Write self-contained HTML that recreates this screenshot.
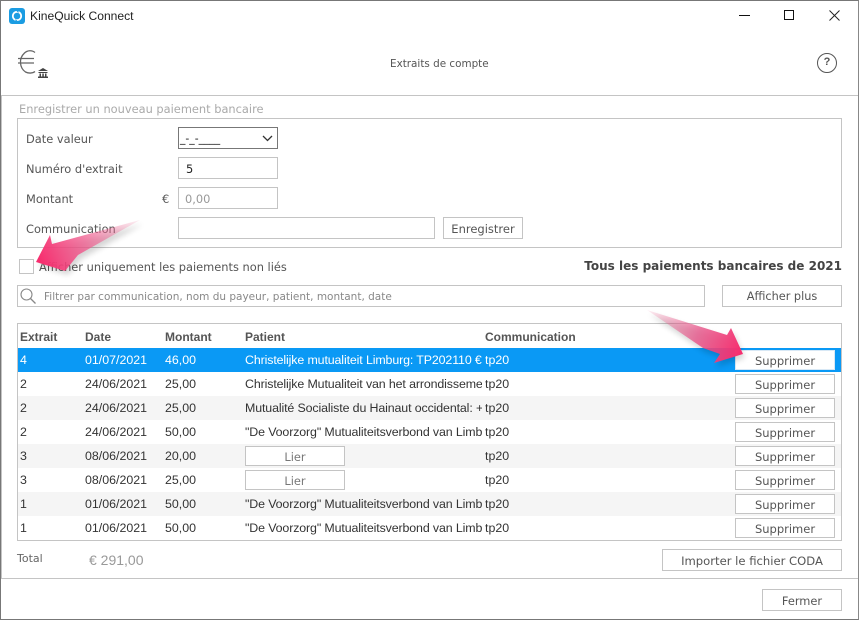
<!DOCTYPE html>
<html lang="fr"><head><meta charset="utf-8"><title>KineQuick Connect</title>
<style>
html,body{margin:0;padding:0;background:#fff}
#w{position:relative;width:859px;height:620px;overflow:hidden;background:#fff;font:11.4px "DejaVu Sans",sans-serif;color:#555}
#w div,#w svg{position:absolute;box-sizing:border-box}
.t{white-space:nowrap;line-height:16px;height:16px}
.b{border:1px solid #c4c4c4;background:#fff}
.btn{border:1px solid #c4c4c4;background:#fff;text-align:center;color:#555;white-space:nowrap}
.c{font:12.4px/25px "Liberation Sans",sans-serif;color:#333;white-space:nowrap;overflow:hidden;height:24px}
.n{letter-spacing:-.12px}
.h{font:bold 12px/26px "Liberation Sans",sans-serif;color:#555;white-space:nowrap;height:24px}
.s{left:735px;width:100px;height:20px;line-height:20px;font-size:11.5px}
.l{left:245px;width:100px;height:20px;line-height:20px;color:#777}
</style></head><body><div id="w">
<div style="left:0;top:0;width:859px;height:620px;border:1px solid #777;border-right-color:#888;z-index:9"></div>

<svg style="left:9px;top:8px" width="16" height="16" viewBox="0 0 16 16"><rect width="16" height="16" rx="3" fill="#1b9ce2"/><circle cx="8" cy="8" r="4.2" fill="none" stroke="#fff" stroke-width="1.8"/><path d="M7 2.500h2.500v2.500M9 13.500H6.500V11" fill="#1b9ce2"/></svg>
<div class="t" style="left:30px;top:8px;font:12.1px/16px 'Liberation Sans',sans-serif;color:#222">KineQuick Connect</div>
<div style="left:739px;top:15px;width:11px;height:1px;background:#111"></div>
<div style="left:784px;top:10px;width:10px;height:10px;border:1px solid #111"></div>
<svg style="left:829px;top:10px" width="11" height="11"><path d="M.5.5l10 10M10.500.5l-10 10" stroke="#222" fill="none"/></svg>

<svg style="left:18px;top:48px" width="32" height="34" viewBox="0 0 32 34"><path d="M17 4.500C14 2 9.500 2.200 6.500 5 3.500 7.800 2.200 11 2.500 15c.3 4 2 7 5 9 3 1.500 7 1.500 9.500-.5M0 10.500h16M0 15h16" fill="none" stroke="#666" stroke-width="1.300"/><path d="M20 23l5-3 5 3zM20.500 24h9v1h-9zM21.500 25.500H23v3h-1.500zM24.300 25.500h1.500v3h-1.500zM27 25.500h1.500v3H27zM20 28.500h10V30H20z" fill="#444"/></svg>
<div class="t" style="left:390px;top:56px;color:#555;font-size:10.400px">Extraits de compte</div>
<div style="left:817px;top:53px;width:20px;height:20px;border:1.300px solid #555;border-radius:50%;text-align:center;font:bold 11px/17px 'Liberation Sans',sans-serif;color:#555">?</div>

<div style="left:1px;top:95px;width:857px;height:1px;background:#c4c4c4"></div>
<div style="left:1px;top:95px;width:1px;height:483px;background:#c4c4c4"></div>
<div style="left:1px;top:578px;width:857px;height:1px;background:#c4c4c4"></div>
<div class="t" style="left:19px;top:101px;color:#aaa">Enregistrer un nouveau paiement bancaire</div>

<div class="b" style="left:17px;top:118px;width:825px;height:130px"></div>
<div class="t" style="left:26px;top:131px">Date valeur</div>
<div style="left:178px;top:127px;width:100px;height:22px;border:1px solid #777;background:#fff;color:#111;font:10.800px/22px 'DejaVu Sans',sans-serif;padding-left:1px">_-_-____</div>
<svg style="left:262px;top:135px" width="11" height="7"><path d="M1 1l4.500 4.500L10 1" fill="none" stroke="#333" stroke-width="1.300"/></svg>
<div class="t" style="left:26px;top:161px">Numéro d'extrait</div>
<div class="b" style="left:178px;top:157px;width:100px;height:22px;padding-left:7px;line-height:22px;color:#222">5</div>
<div class="t" style="left:26px;top:191px">Montant</div>
<div class="t" style="left:162px;top:191px">€</div>
<div class="b" style="left:178px;top:187px;width:100px;height:22px;padding-left:6px;line-height:22px;color:#999">0,00</div>
<div class="t" style="left:26px;top:221px">Communication</div>
<div class="b" style="left:178px;top:217px;width:257px;height:22px"></div>
<div class="btn" style="left:443px;top:217px;width:80px;height:22px;line-height:22px;font-size:11.500px">Enregistrer</div>

<div class="b" style="left:19px;top:259px;width:15px;height:15px"></div>
<div class="t" style="left:39px;top:259px">Afficher uniquement les paiements non liés</div>
<div class="t" style="left:584px;top:258px;font:bold 12px/16px 'DejaVu Sans',sans-serif;color:#444;letter-spacing:0;width:258px;text-align:right">Tous les paiements bancaires de 2021</div>

<div class="b" style="left:17px;top:285px;width:688px;height:22px"></div>
<svg style="left:19px;top:287px" width="18" height="18"><circle cx="7.500" cy="7.500" r="5.500" fill="none" stroke="#888" stroke-width="1.100"/><path d="M11.500 11.500l5 5" stroke="#888" stroke-width="1.300"/></svg>
<div class="t" style="left:44px;top:289px;color:#888;font-size:10.500px">Filtrer par communication, nom du payeur, patient, montant, date</div>
<div class="btn" style="left:722px;top:285px;width:120px;height:22px;line-height:22px;font-size:11.300px">Afficher plus</div>

<div class="b" style="left:17px;top:323px;width:825px;height:218px"></div>
<div class="h" style="left:20px;top:324px">Extrait</div><div class="h" style="left:85px;top:324px">Date</div><div class="h" style="left:165px;top:324px">Montant</div><div class="h" style="left:245px;top:324px">Patient</div><div class="h" style="left:485px;top:324px">Communication</div>

<div style="left:18px;top:348px;width:823px;height:24px;background:#0a99f5"></div>
<div style="left:18px;top:396px;width:823px;height:24px;background:#f5f5f5"></div>
<div style="left:18px;top:444px;width:823px;height:24px;background:#f5f5f5"></div>
<div style="left:18px;top:492px;width:823px;height:24px;background:#f5f5f5"></div>

<div class="c" style="left:20px;top:348px;color:#fff">4</div><div class="c" style="left:85px;top:348px;color:#fff">01/07/2021</div><div class="c" style="left:165px;top:348px;color:#fff">46,00</div><div class="c n" style="left:245px;top:348px;width:237px;color:#fff">Christelijke mutualiteit Limburg: TP202110 €46,00</div><div class="c" style="left:485px;top:348px;color:#fff">tp20</div>
<div class="c" style="left:20px;top:372px">2</div><div class="c" style="left:85px;top:372px">24/06/2021</div><div class="c" style="left:165px;top:372px">25,00</div><div class="c n" style="left:245px;top:372px;width:237px">Christelijke Mutualiteit van het arrondissement</div><div class="c" style="left:485px;top:372px">tp20</div>
<div class="c" style="left:20px;top:396px">2</div><div class="c" style="left:85px;top:396px">24/06/2021</div><div class="c" style="left:165px;top:396px">25,00</div><div class="c n" style="left:245px;top:396px;width:237px">Mutualité Socialiste du Hainaut occidental: +</div><div class="c" style="left:485px;top:396px">tp20</div>
<div class="c" style="left:20px;top:420px">2</div><div class="c" style="left:85px;top:420px">24/06/2021</div><div class="c" style="left:165px;top:420px">50,00</div><div class="c n" style="left:245px;top:420px;width:237px">"De Voorzorg" Mutualiteitsverbond van Limburg</div><div class="c" style="left:485px;top:420px">tp20</div>
<div class="c" style="left:20px;top:444px">3</div><div class="c" style="left:85px;top:444px">08/06/2021</div><div class="c" style="left:165px;top:444px">20,00</div><div class="btn l" style="top:446px">Lier</div><div class="c" style="left:485px;top:444px">tp20</div>
<div class="c" style="left:20px;top:468px">3</div><div class="c" style="left:85px;top:468px">08/06/2021</div><div class="c" style="left:165px;top:468px">25,00</div><div class="btn l" style="top:470px">Lier</div><div class="c" style="left:485px;top:468px">tp20</div>
<div class="c" style="left:20px;top:492px">1</div><div class="c" style="left:85px;top:492px">01/06/2021</div><div class="c" style="left:165px;top:492px">50,00</div><div class="c n" style="left:245px;top:492px;width:237px">"De Voorzorg" Mutualiteitsverbond van Limburg</div><div class="c" style="left:485px;top:492px">tp20</div>
<div class="c" style="left:20px;top:516px">1</div><div class="c" style="left:85px;top:516px">01/06/2021</div><div class="c" style="left:165px;top:516px">50,00</div><div class="c n" style="left:245px;top:516px;width:237px">"De Voorzorg" Mutualiteitsverbond van Limburg</div><div class="c" style="left:485px;top:516px">tp20</div>

<div class="btn s" style="top:350px;border-color:#d8e8f5">Supprimer</div>
<div class="btn s" style="top:374px">Supprimer</div>
<div class="btn s" style="top:398px">Supprimer</div>
<div class="btn s" style="top:422px">Supprimer</div>
<div class="btn s" style="top:446px">Supprimer</div>
<div class="btn s" style="top:470px">Supprimer</div>
<div class="btn s" style="top:494px">Supprimer</div>
<div class="btn s" style="top:518px">Supprimer</div>

<div class="t" style="left:17px;top:551px;color:#666;font-size:11px">Total</div>
<div class="t" style="left:89px;top:552px;font:14px/16px 'Liberation Sans',sans-serif;color:#999">€ 291,00</div>
<div class="btn" style="left:662px;top:549px;width:180px;height:22px;line-height:23px;font-size:11.600px">Importer le fichier CODA</div>
<div class="btn" style="left:762px;top:589px;width:80px;height:22px;line-height:23px;font-size:11.400px">Fermer</div>

<svg style="left:0;top:0;z-index:5" width="859" height="620">
<defs>
<linearGradient id="a" gradientUnits="userSpaceOnUse" x1="140" y1="220" x2="40" y2="262"><stop offset="0" stop-color="#f0709a" stop-opacity=".1"/><stop offset=".55" stop-color="#f0588c" stop-opacity=".75"/><stop offset="1" stop-color="#f72d6e"/></linearGradient>
<linearGradient id="b" gradientUnits="userSpaceOnUse" x1="647" y1="310" x2="740" y2="354"><stop offset="0" stop-color="#f0709a" stop-opacity=".1"/><stop offset=".55" stop-color="#e8558a" stop-opacity=".8"/><stop offset="1" stop-color="#f72d6e"/></linearGradient>
<filter id="f" x="-20%" y="-30%" width="140%" height="170%"><feGaussianBlur stdDeviation="3"/></filter>
</defs>
<polygon points="140,220 78,255 65,271 36,262 50,235 52,244" fill="#000" opacity=".16" filter="url(#f)" transform="translate(3,4)"/>
<polygon points="140,220 78,255 65,271 36,262 50,235 52,244" fill="url(#a)"/>
<polygon points="647,310 727,335 731,328 743,354 714,363 720,354 703,348" fill="#000" opacity=".16" filter="url(#f)" transform="translate(2,4)"/>
<polygon points="647,310 727,335 731,328 743,354 714,363 720,354 703,348" fill="url(#b)"/>
</svg>
</div></body></html>
